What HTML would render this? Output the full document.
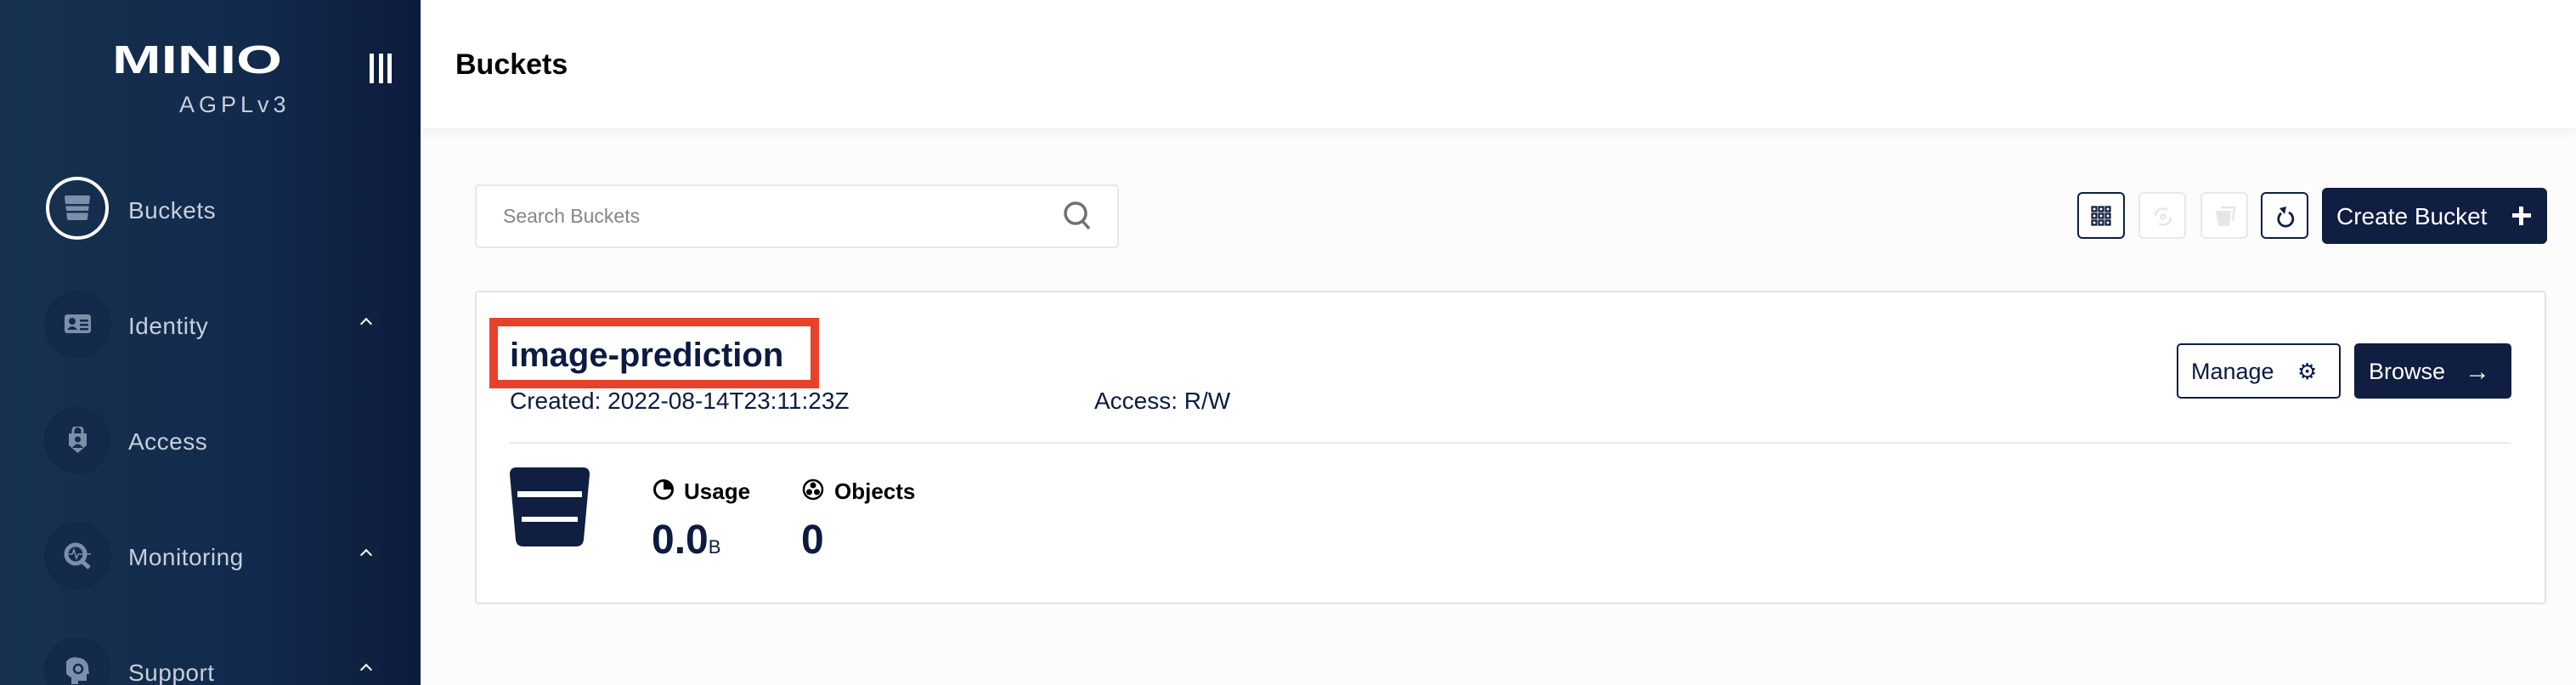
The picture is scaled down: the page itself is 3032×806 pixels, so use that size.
<!DOCTYPE html>
<html style="overflow:hidden;height:806px"><head><meta charset="utf-8"><style>
*{box-sizing:border-box;margin:0;padding:0}
body{width:3032px;height:806px;overflow:hidden;background:#fcfcfc;font-family:"Liberation Sans",sans-serif;position:relative}
.abs{position:absolute}
#side{left:0;top:0;width:495px;height:806px;overflow:hidden;background:linear-gradient(90deg,#17314f 0%,#122a4c 60%,#0d1b3d 100%)}
.nav{position:absolute;left:54px;width:74px;height:74px;border-radius:50%;background:#132a4b;box-shadow:0 0 0 2px #122848}
.nav.act{background:transparent;border:4px solid #fff;box-shadow:none}
.lbl{position:absolute;left:151px;font-size:28px;color:#c7cfdc;letter-spacing:.5px;transform:translateY(-50%)}
.chev{position:absolute;left:416px;width:30px;height:22px;background:#0f2140;border-radius:2px}
.chev:after{content:"";position:absolute;left:10px;top:8px;width:8px;height:8px;border-left:2px solid #fff;border-top:2px solid #fff;transform:rotate(45deg)}
.ib{position:absolute;top:226px;width:56px;height:55px;border:2px solid #0f1e41;border-radius:6px;background:#fff}
.ib.dis{border-color:#e8e8e8}
.navy{color:#0b1b41}
</style></head><body>
<div id="side" class="abs">
 <svg class="abs" style="left:130px;top:48px" width="206" height="42"><text x="2" y="38" font-family="Liberation Sans" font-weight="bold" font-size="46" fill="#fff" textLength="200" lengthAdjust="spacingAndGlyphs">MINIO</text></svg>
 <div class="abs" style="left:211px;top:108px;font-size:27px;color:#c7cfdc;letter-spacing:5px">AGPLv3</div>
 <div class="abs" style="left:435px;top:63px;width:26px;height:35px;display:flex;justify-content:space-between"><i style="width:5px;background:#fff"></i><i style="width:5px;background:#fff"></i><i style="width:5px;background:#fff"></i></div>
 <div class="nav act" style="top:208px"></div>
 <svg class="abs" style="left:75px;top:230px" width="32" height="30"><path d="M1 2 Q1 0 3 0 H29 Q31 0 31 2 L28 27 Q28 29 26 29 H6 Q4 29 4 27Z" fill="#7d8ea8"/><rect x="2" y="10" width="28" height="2.5" fill="#17314f"/><rect x="3" y="18" width="26" height="2.5" fill="#17314f"/></svg>
 <div class="lbl" style="top:248px">Buckets</div>
 <div class="nav" style="top:345px"></div>
 <svg class="abs" style="left:76px;top:370px" width="31" height="22"><rect width="31" height="22" rx="3" fill="#7d8ea8"/><circle cx="9" cy="8" r="4" fill="#132a4b"/><path d="M3 18 Q9 10 15 18Z" fill="#132a4b"/><rect x="18" y="6" width="10" height="2.5" fill="#132a4b"/><rect x="18" y="11" width="10" height="2.5" fill="#132a4b"/><rect x="18" y="16" width="10" height="2.5" fill="#132a4b"/></svg>
 <div class="lbl" style="top:384px">Identity</div><div class="chev" style="top:368px"></div>
 <div class="nav" style="top:481px"></div>
 <svg class="abs" style="left:79px;top:502px" width="25" height="32"><path d="M2 8 H23 V22 L12.5 31 L2 22Z" fill="#7d8ea8"/><path d="M7 8 V5 A5.5 5.5 0 0 1 18 5 V8" stroke="#7d8ea8" stroke-width="3" fill="none"/><circle cx="12.5" cy="15" r="3.5" fill="#132a4b"/><path d="M6 25 Q12.5 16 19 25Z" fill="#132a4b"/></svg>
 <div class="lbl" style="top:520px">Access</div>
 <div class="nav" style="top:617px"></div>
 <svg class="abs" style="left:75px;top:638px" width="34" height="32"><circle cx="14" cy="14" r="11" stroke="#7d8ea8" stroke-width="5" fill="none"/><path d="M21 22 L30 30" stroke="#7d8ea8" stroke-width="5"/><path d="M6 14 H10 L12 9 L15 19 L17 14 H32" stroke="#7d8ea8" stroke-width="1.6" fill="none"/></svg>
 <div class="lbl" style="top:656px">Monitoring</div><div class="chev" style="top:640px"></div>
 <div class="nav" style="top:752px"></div>
 <svg class="abs" style="left:78px;top:773px" width="28" height="33"><path d="M14 1 A12 12 0 0 1 26 14 L27 20 H24 V28 H14 V32 H6 V24 A12 12 0 0 1 14 1Z" fill="#7d8ea8"/><circle cx="14" cy="14" r="5" stroke="#132a4b" stroke-width="2.5" fill="none"/></svg>
 <div class="lbl" style="top:792px">Support</div><div class="chev" style="top:775px"></div>
</div>
<div class="abs" style="left:495px;top:0;width:2537px;height:151px;background:#fff;box-shadow:0 4px 14px rgba(0,0,0,.06)"></div>
<div class="abs" style="left:536px;top:57px;font-size:34px;font-weight:bold;color:#000">Buckets</div>
<div class="abs" style="left:559px;top:217px;width:758px;height:75px;background:#fff;border:2px solid #e6e8ea;border-radius:5px"></div>
<div class="abs" style="left:592px;top:241px;font-size:23px;color:#858585">Search Buckets</div>
<svg class="abs" style="left:1250px;top:235px" width="36" height="38"><circle cx="16" cy="16" r="12" stroke="#707070" stroke-width="3.5" fill="none"/><path d="M24 25 L32 34" stroke="#707070" stroke-width="3.5"/></svg>
<div class="ib" style="left:2445px"><svg style="position:absolute;left:14px;top:14px" width="24" height="24"><g fill="none" stroke="#0f1e41" stroke-width="2.2"><rect x="1.5" y="1.5" width="5" height="5"/><rect x="9.5" y="1.5" width="5" height="5"/><rect x="17.5" y="1.5" width="5" height="5"/><rect x="1.5" y="9.5" width="5" height="5"/><rect x="9.5" y="9.5" width="5" height="5"/><rect x="17.5" y="9.5" width="5" height="5"/><rect x="1.5" y="17.5" width="5" height="5"/><rect x="9.5" y="17.5" width="5" height="5"/><rect x="17.5" y="17.5" width="5" height="5"/></g></svg></div>
<div class="ib dis" style="left:2517px"><svg style="position:absolute;left:14px;top:14px" width="26" height="26"><g stroke="#e6e6e6" stroke-width="2.5" fill="none"><path d="M4 12 A9 9 0 0 1 18 5"/><path d="M22 14 A9 9 0 0 1 8 21"/><circle cx="13" cy="13" r="2.5"/></g></svg></div>
<div class="ib dis" style="left:2590px"><svg style="position:absolute;left:14px;top:14px" width="26" height="26"><path d="M2 6 H20 L18 24 H5Z" fill="#e6e6e6"/><path d="M8 2 H24 L22 18" stroke="#e6e6e6" stroke-width="2.5" fill="none"/></svg></div>
<div class="ib" style="left:2661px"><svg style="position:absolute;left:14px;top:13px" width="26" height="28"><path d="M17 9 A8.5 8.5 0 1 1 8 10" stroke="#0f1e41" stroke-width="2.8" fill="none"/><path d="M6 4 L14 2 L12 11Z" fill="#0f1e41"/></svg></div>
<div class="abs" style="left:2733px;top:221px;width:265px;height:66px;background:#0f1e41;border-radius:6px;color:#fff;font-size:28px;line-height:68px;padding-left:17px">Create Bucket<span style="position:absolute;left:224px;top:22px;width:22px;height:22px"><i style="position:absolute;left:8px;top:0;width:5px;height:22px;background:#fff"></i><i style="position:absolute;left:0;top:8px;width:22px;height:5px;background:#fff"></i></span></div>
<div class="abs" style="left:559px;top:342px;width:2438px;height:369px;background:#fff;border:2px solid #e4e4e4;border-radius:4px"></div>
<div class="abs" style="left:576px;top:374px;width:388px;height:83px;border:10px solid #e8412a"></div>
<div class="abs navy" style="left:600px;top:396px;font-size:40px;font-weight:bold">image-prediction</div>
<div class="abs navy" style="left:600px;top:456px;font-size:28px">Created: 2022-08-14T23:11:23Z</div>
<div class="abs navy" style="left:1288px;top:456px;font-size:28px">Access: R/W</div>
<div class="abs" style="left:2562px;top:404px;width:193px;height:65px;border:2px solid #0f1e41;border-radius:5px;background:#fff;font-size:27px;line-height:63px;padding-left:15px"><span style="color:#0b1b41">Manage</span><span style="position:absolute;left:140px;top:0;font-size:26px;color:#0b1b41">⚙</span></div>
<div class="abs" style="left:2771px;top:404px;width:185px;height:65px;background:#0f1e41;border-radius:5px;color:#fff;font-size:27px;line-height:67px;padding-left:17px">Browse<span style="position:absolute;left:130px;top:0;font-size:30px;font-weight:bold">→</span></div>
<div class="abs" style="left:600px;top:520px;width:2355px;height:2px;background:#ebebeb"></div>
<svg class="abs" style="left:600px;top:550px" width="94" height="94"><path d="M0 8 Q0 0 8 0 H86 Q94 0 94 8 L87 85 Q86 93 78 93 H16 Q8 93 7 85Z" fill="#0f1e41"/><rect x="9" y="28" width="76" height="7" fill="#fff"/><rect x="14" y="58" width="66" height="6" fill="#fff"/></svg>
<svg class="abs" style="left:768px;top:563px" width="26" height="26"><circle cx="13" cy="13" r="10.5" stroke="#000" stroke-width="3" fill="none"/><path d="M13 13 V3 A10 10 0 0 1 23 13Z" fill="#000"/></svg>
<div class="abs" style="left:805px;top:563px;font-size:26px;font-weight:bold;color:#000">Usage</div>
<svg class="abs" style="left:944px;top:563px" width="26" height="26"><circle cx="13" cy="13" r="11" stroke="#000" stroke-width="2.5" fill="none"/><circle cx="13" cy="8" r="3.5"/><circle cx="8.5" cy="16" r="3.5"/><circle cx="17.5" cy="16" r="3.5"/></svg>
<div class="abs" style="left:982px;top:563px;font-size:26px;font-weight:bold;color:#000">Objects</div>
<div class="abs navy" style="left:767px;top:608px;font-size:48px;font-weight:bold">0.0<span style="font-size:22px;font-weight:normal">B</span></div>
<div class="abs navy" style="left:943px;top:608px;font-size:48px;font-weight:bold">0</div>
</body></html>
